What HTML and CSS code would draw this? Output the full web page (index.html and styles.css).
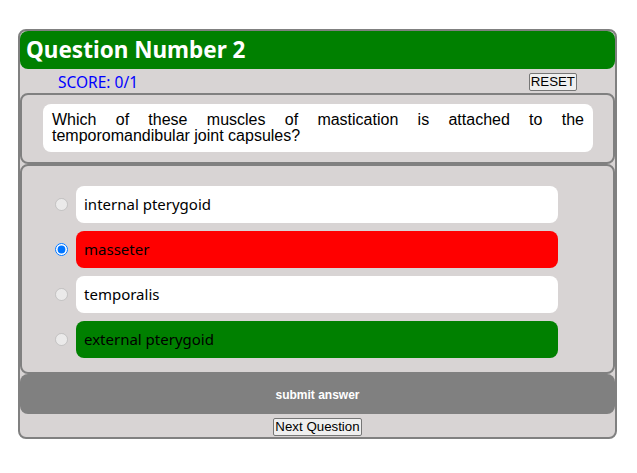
FILE: index.html
```html
<!DOCTYPE html>
<html>
<head>
<meta charset="utf-8">
<link rel="stylesheet" href="styles.css">
</head>
<body>
<div class="quiz">
  <div class="header">Question Number 2</div>
  <div class="score-row">
    <span class="score">SCORE: 0/1</span>
    <button class="reset">RESET</button>
  </div>
  <div class="question-panel">
    <div class="question">Which of these muscles of mastication is attached to the temporomandibular joint capsules?</div>
  </div>
  <div class="options-panel">
    <label class="option"><input type="radio" name="a" disabled><span class="opt-text">internal pterygoid</span></label>
    <label class="option"><input type="radio" name="a" checked><span class="opt-text wrong">masseter</span></label>
    <label class="option"><input type="radio" name="a" disabled><span class="opt-text">temporalis</span></label>
    <label class="option"><input type="radio" name="a" disabled><span class="opt-text right">external pterygoid</span></label>
  </div>
  <div class="submit">submit answer</div>
  <div class="next-row"><button class="next">Next Question</button></div>
</div>
</body>
</html>
```
FILE: styles.css
```css
html, body {
  margin: 0;
  padding: 0;
  background: #fff;
}
.quiz {
  margin: 29px 0 0 18px;
  width: 595px;
  border: 2px solid #808080;
  border-radius: 8px;
  background: #d8d4d4;
  font-family: "Noto Sans", "Open Sans", sans-serif;
}
.header {
  height: 38px;
  background: #008000;
  color: #fff;
  border-radius: 8px;
  font-weight: bold;
  font-size: 22.5px;
  line-height: 38px;
  padding-left: 6px;
}
.score-row {
  height: 24px;
  display: flex;
  align-items: center;
  justify-content: space-between;
  padding: 2px 38px 0 38px;
  box-sizing: border-box;
}
.score {
  color: #0000ff;
  font-size: 15.5px;
}
.reset, .next {
  font-family: "Liberation Sans", Arial, sans-serif;
  font-size: 13.3px;
  padding: 0 1px;
  border: 1px solid #767676;
  border-radius: 2px;
  background: #efefef;
  color: #000;
  height: 18px;
  line-height: 14px;
}
.question-panel {
  border: 2px solid #808080;
  border-radius: 8px;
  padding: 9px 20px 10px 21px;
}
.question {
  background: #fff;
  border-radius: 8px;
  padding: 8px 9px 8px 9px;
  font-family: "Liberation Sans", Arial, sans-serif;
  font-size: 16px;
  line-height: 16px;
  text-align: justify;
}
.options-panel {
  border: 2px solid #808080;
  border-radius: 8px;
  padding: 20px 0 14px 0;
  display: flex;
  flex-direction: column;
  gap: 8px;
}
.option {
  display: flex;
  align-items: center;
  padding-left: 31px;
}
.option input {
  margin: 0 8px 0 2px;
  width: 13px;
  height: 13px;
}
.opt-text {
  width: 474px;
  height: 37px;
  line-height: 37px;
  padding-left: 8px;
  background: #fff;
  border-radius: 8px;
  font-size: 15px;
  color: #000;
}
.opt-text.wrong { background: #ff0000; }
.opt-text.right { background: #008000; }
.submit {
  height: 40px;
  line-height: 42px;
  background: #808080;
  border-radius: 8px;
  color: #fff;
  text-align: center;
  font-family: "Liberation Sans", Arial, sans-serif;
  font-weight: bold;
  font-size: 12px;
}
.next-row {
  display: flex;
  justify-content: center;
  padding: 4px 0 1px;
}
```
